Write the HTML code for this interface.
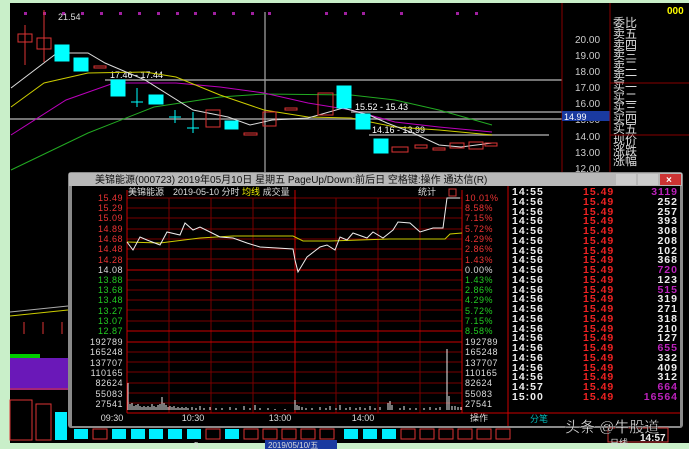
<!DOCTYPE html>
<html><head><meta charset="utf-8"><style>
html,body{margin:0;padding:0;background:#c9efc9;width:689px;height:449px;overflow:hidden}
svg{display:block}
text{font-family:"Liberation Sans","Noto Sans CJK SC",sans-serif}
.cn{font-family:"Liberation Sans","Noto Sans CJK SC",sans-serif}
</style></head><body>
<svg width="689" height="449" viewBox="0 0 689 449" xmlns="http://www.w3.org/2000/svg">
<rect x="0" y="0" width="689" height="449" fill="#c9efc9"/>
<rect x="10" y="3" width="679" height="440" fill="#000"/>
<g fill="#a020a0">
<rect x="24" y="12" width="3" height="3"/><rect x="43" y="12" width="3" height="3"/><rect x="62" y="12" width="3" height="3"/><rect x="81" y="12" width="3" height="3"/><rect x="100" y="12" width="3" height="3"/><rect x="119" y="12" width="3" height="3"/><rect x="138" y="12" width="3" height="3"/><rect x="157" y="12" width="3" height="3"/><rect x="176" y="12" width="3" height="3"/><rect x="194" y="12" width="3" height="3"/><rect x="213" y="12" width="3" height="3"/><rect x="232" y="12" width="3" height="3"/><rect x="251" y="12" width="3" height="3"/><rect x="268" y="12" width="3" height="3"/><rect x="325" y="12" width="3" height="3"/><rect x="344" y="12" width="3" height="3"/><rect x="362" y="12" width="3" height="3"/><rect x="400" y="12" width="3" height="3"/><rect x="456" y="12" width="3" height="3"/><rect x="475" y="12" width="3" height="3"/>
</g>
<text x="58" y="20" fill="#ddd" font-size="9">21.54</text>
<line x1="265" y1="12" x2="265" y2="172" stroke="#ccc"/>
<g stroke="#999" stroke-width="1.5">
<line x1="105" y1="80" x2="562" y2="80"/><line x1="351" y1="112" x2="562" y2="112"/><line x1="10" y1="119" x2="562" y2="119"/><line x1="369" y1="135" x2="549" y2="135"/>
</g>
<text x="110" y="78" fill="#fff" font-size="9">17.46 - 17.44</text>
<text x="355" y="110" fill="#fff" font-size="9">15.52 - 15.43</text>
<text x="372" y="133" fill="#fff" font-size="9">14.16 - 13.99</text>
<g fill="none" stroke-width="1">
<polyline stroke="#2a2" points="11,170 88,133 154,107 220,97 264,94 351,95 395,100 439,110 492,125"/>
<polyline stroke="#b0b" points="11,135 66,100 114,83 176,83 220,87 264,93 308,103 351,110 395,122 439,127 492,132"/>
<polyline stroke="#cc0" points="11,107 44,83 88,73 145,72 176,77 220,95 264,110 308,117 351,118 395,127 439,130 492,135"/>
<polyline stroke="#ddd" points="11,88 57,53 88,53 105,63 145,80 193,110 228,117 250,125 272,120 308,118 343,108 369,115 387,123 413,133 439,145 461,147 492,143"/>
</g>
<g stroke="#d33" fill="none">
<line x1="44" y1="10" x2="44" y2="62"/><line x1="25" y1="25" x2="25" y2="65"/>
<rect x="18" y="34" width="14" height="8"/><rect x="37" y="38" width="14" height="11"/>
<rect x="206" y="110" width="14" height="17"/><rect x="263" y="112" width="13" height="14"/>
<rect x="318" y="93" width="15" height="22"/><rect x="392" y="147" width="16" height="5"/>
<rect x="450" y="143" width="14" height="5"/><rect x="469" y="142" width="14" height="7"/>
<rect x="415" y="145" width="12" height="3"/><rect x="433" y="148" width="12" height="2"/>
<rect x="94" y="66" width="12" height="2"/><rect x="285" y="108" width="12" height="2"/>
<rect x="244" y="133" width="13" height="2"/><rect x="485" y="143" width="12" height="3"/>
</g>
<g fill="#0ff" stroke="#0ff">
<rect x="55" y="45" width="14" height="16"/><rect x="74" y="58" width="14" height="13"/>
<rect x="111" y="80" width="14" height="16"/><rect x="149" y="95" width="14" height="9"/>
<rect x="225" y="121" width="13" height="8"/><rect x="337" y="86" width="14" height="22"/>
<rect x="356" y="114" width="14" height="15"/><rect x="374" y="139" width="14" height="14"/>
<line x1="137" y1="88" x2="137" y2="107"/><line x1="131" y1="102" x2="143" y2="102"/>
<line x1="175" y1="110" x2="175" y2="123"/><line x1="169" y1="117" x2="181" y2="117"/>
<line x1="193" y1="112" x2="193" y2="133"/><line x1="187" y1="128" x2="199" y2="128"/>
</g>
<line x1="562" y1="3" x2="562" y2="172" stroke="#800"/>
<g fill="#ccc" font-size="10">
<text x="575" y="43">20.00</text><text x="575" y="59">19.00</text><text x="575" y="75">18.00</text><text x="575" y="91">17.00</text><text x="575" y="107">16.00</text><text x="575" y="123">15.00</text><text x="575" y="140">14.00</text><text x="575" y="156">13.00</text><text x="575" y="172">12.00</text>
</g>
<rect x="562" y="111" width="48" height="10" fill="#1a3aa0"/>
<text x="564" y="120" fill="#fff" font-size="9">14.99</text>
<line x1="610" y1="3" x2="610" y2="172" stroke="#800"/>
<text x="667" y="14" fill="#ff0" font-size="10" font-weight="bold">000</text>
<g fill="#ddd" font-size="12" class="cn">
<text x="613" y="27">委比</text><text x="613" y="38">卖五</text><text x="613" y="49">卖四</text><text x="613" y="59">卖三</text><text x="613" y="70">卖二</text><text x="613" y="80">卖一</text><text x="613" y="91">买一</text><text x="613" y="102">买二</text><text x="613" y="112">买三</text><text x="613" y="123">买四</text><text x="613" y="133">买五</text><text x="613" y="144">现价</text><text x="613" y="155">涨跌</text><text x="613" y="165">涨幅</text>
</g>
<line x1="610" y1="83" x2="689" y2="83" stroke="#800"/><line x1="610" y1="135" x2="689" y2="135" stroke="#800"/>
<g stroke="#d33" fill="none">
<line x1="24" y1="322" x2="24" y2="334"/><line x1="43" y1="322" x2="43" y2="334"/><line x1="62" y1="322" x2="62" y2="334"/>
<rect x="10" y="400" width="22" height="40"/><rect x="36" y="404" width="15" height="36"/>
</g>
<line x1="10" y1="312" x2="68" y2="306" stroke="#aaa"/>
<line x1="10" y1="316" x2="68" y2="310" stroke="#cc0"/>
<rect x="10" y="354" width="30" height="4" fill="#0c0"/>
<rect x="10" y="358" width="58" height="32" fill="#6a18b8"/>
<line x1="10" y1="389" x2="68" y2="389" stroke="#d33"/>
<rect x="68" y="172" width="615" height="256" fill="#8a8a8a" rx="3"/>
<rect x="69" y="173" width="613" height="13" fill="#b8b8b8"/>
<text x="95" y="183" fill="#111" font-size="10" class="cn">美锦能源(000723) 2019年05月10日 星期五 PageUp/Down:前后日 空格键:操作 通达信(R)</text>
<rect x="616" y="174" width="20" height="11" fill="#ccc"/><rect x="638" y="174" width="20" height="11" fill="#ccc"/><rect x="660" y="174" width="21" height="11" fill="#c33"/>
<text x="666" y="183" fill="#fff" font-size="10" font-weight="bold">×</text>
<rect x="72" y="186" width="608" height="240" fill="#000"/>
<text x="128" y="195" fill="#ddd" font-size="9" class="cn">美锦能源　2019-05-10 分时 <tspan fill="#ee0">均线</tspan> 成交量</text>
<text x="418" y="195" fill="#ddd" font-size="9" class="cn">统计</text>
<rect x="449" y="189" width="7" height="7" fill="none" stroke="#c33"/>
<g stroke="#700" stroke-width="1">
<line x1="127" y1="198" x2="462" y2="198"/><line x1="127" y1="208" x2="462" y2="208"/><line x1="127" y1="218" x2="462" y2="218"/><line x1="127" y1="229" x2="462" y2="229"/><line x1="127" y1="239" x2="462" y2="239"/><line x1="127" y1="249" x2="462" y2="249"/><line x1="127" y1="259" x2="462" y2="259"/><line x1="127" y1="280" x2="462" y2="280"/><line x1="127" y1="290" x2="462" y2="290"/><line x1="127" y1="300" x2="462" y2="300"/><line x1="127" y1="310" x2="462" y2="310"/><line x1="127" y1="321" x2="462" y2="321"/><line x1="127" y1="352" x2="462" y2="352"/><line x1="127" y1="362" x2="462" y2="362"/><line x1="127" y1="372" x2="462" y2="372"/><line x1="127" y1="383" x2="462" y2="383"/><line x1="127" y1="393" x2="462" y2="393"/><line x1="127" y1="403" x2="462" y2="403"/>
<line x1="169" y1="198" x2="169" y2="413"/><line x1="211" y1="198" x2="211" y2="413"/><line x1="253" y1="198" x2="253" y2="413"/><line x1="336" y1="198" x2="336" y2="413"/><line x1="378" y1="198" x2="378" y2="413"/><line x1="420" y1="198" x2="420" y2="413"/>
</g>
<g stroke="#c00" stroke-width="1">
<line x1="127" y1="270" x2="462" y2="270"/><line x1="127" y1="331" x2="462" y2="331"/><line x1="127" y1="342" x2="462" y2="342"/><line x1="127" y1="413" x2="462" y2="413"/>
<line x1="127" y1="190" x2="127" y2="413"/><line x1="295" y1="190" x2="295" y2="413"/><line x1="462" y1="190" x2="462" y2="413"/>
</g>
<g font-size="9" text-anchor="end" letter-spacing="0.5">
<g fill="#e33"><text x="123" y="201">15.49</text><text x="123" y="211">15.29</text><text x="123" y="221">15.09</text><text x="123" y="232">14.89</text><text x="123" y="242">14.68</text><text x="123" y="252">14.48</text><text x="123" y="263">14.28</text></g>
<text x="123" y="273" fill="#ddd">14.08</text>
<g fill="#2c2"><text x="123" y="283">13.88</text><text x="123" y="293">13.68</text><text x="123" y="303">13.48</text><text x="123" y="314">13.27</text><text x="123" y="324">13.07</text><text x="123" y="334">12.87</text></g>
<g fill="#ddd"><text x="123" y="345">192789</text><text x="123" y="355">165248</text><text x="123" y="366">137707</text><text x="123" y="376">110165</text><text x="123" y="386">82624</text><text x="123" y="397">55083</text><text x="123" y="407">27541</text></g>
</g>
<g font-size="9" letter-spacing="0.5">
<g fill="#e33"><text x="465" y="201">10.01%</text><text x="465" y="211">8.58%</text><text x="465" y="221">7.15%</text><text x="465" y="232">5.72%</text><text x="465" y="242">4.29%</text><text x="465" y="252">2.86%</text><text x="465" y="263">1.43%</text></g>
<text x="465" y="273" fill="#ddd">0.00%</text>
<g fill="#2c2"><text x="465" y="283">1.43%</text><text x="465" y="293">2.86%</text><text x="465" y="303">4.29%</text><text x="465" y="314">5.72%</text><text x="465" y="324">7.15%</text><text x="465" y="334">8.58%</text></g>
<g fill="#ddd"><text x="465" y="345">192789</text><text x="465" y="355">165248</text><text x="465" y="366">137707</text><text x="465" y="376">110165</text><text x="465" y="386">82624</text><text x="465" y="397">55083</text><text x="465" y="407">27541</text></g>
</g>
<polyline fill="none" stroke="#cc0" points="127,242 160,243 200,238 233,236 293,236 303,241 330,241 390,239 445,239 450,234 462,233"/>
<polyline fill="none" stroke="#eee" points="127,242 133,250 140,237 147,240 160,245 167,232 180,235 185,223 193,230 200,227 210,232 220,237 233,238 247,243 260,247 277,248 293,249 295,260 298,272 307,257 320,247 327,245 335,250 340,237 347,240 353,233 367,238 373,232 383,238 393,230 398,222 410,223 420,232 433,228 443,228 447,198 460,198"/>
<path stroke="#eee" fill="none" d="M128 410V383M130 410V404M132 410V403M134 410V406M136 410V405M138 410V404M140 410V406M142 410V407M144 410V406M146 410V407M148 410V406M150 410V407M152 410V404M154 410V406M156 410V407M158 410V405M160 410V404M162 410V397M164 410V403M166 410V405M168 410V407M170 410V406M172 410V407M174 410V406M176 410V408M178 410V407M180 410V408M182 410V407M184 410V408M186 410V407M188 410V408M192 410V407M196 410V408M200 410V406M204 410V408M210 410V407M216 410V408M222 410V408M230 410V407M236 410V408M244 410V406M250 410V408M255 410V405M260 410V408M268 410V408M275 410V409M285 410V409M295 410V400M297 410V405M299 410V406M302 410V407M306 410V408M312 410V408M320 410V407M326 410V408M330 410V406M336 410V408M340 410V405M346 410V408M350 410V407M356 410V408M360 410V407M365 410V408M370 410V406M375 410V408M380 410V407M388 410V403M390 410V401M392 410V405M400 410V408M404 410V406M410 410V408M416 410V408M424 410V408M430 410V407M436 410V408M440 410V407M447 410V349M449 410V396M452 410V406M455 410V406M458 410V407M461 410V407"/>
<g fill="#ddd" font-size="9" text-anchor="middle"><text x="112" y="421">09:30</text><text x="193" y="421">10:30</text><text x="280" y="421">13:00</text><text x="363" y="421">14:00</text></g>
<text x="470" y="421" fill="#ddd" font-size="9" class="cn">操作</text>
<line x1="508" y1="186" x2="508" y2="426" stroke="#c00"/>
<line x1="462" y1="413" x2="680" y2="413" stroke="#c00"/>
<g font-size="10.5" font-weight="bold" letter-spacing="1">
<g fill="#eee">
<text x="512" y="195">14:55</text><text x="512" y="205">14:56</text><text x="512" y="215">14:56</text><text x="512" y="224">14:56</text><text x="512" y="234">14:56</text><text x="512" y="244">14:56</text><text x="512" y="254">14:56</text><text x="512" y="263">14:56</text><text x="512" y="273">14:56</text><text x="512" y="283">14:56</text><text x="512" y="293">14:56</text><text x="512" y="302">14:56</text><text x="512" y="312">14:56</text><text x="512" y="322">14:56</text><text x="512" y="332">14:56</text><text x="512" y="341">14:56</text><text x="512" y="351">14:56</text><text x="512" y="361">14:56</text><text x="512" y="371">14:56</text><text x="512" y="380">14:56</text><text x="512" y="390">14:57</text><text x="512" y="400">15:00</text>
</g>
<g fill="#e22">
<text x="583" y="195">15.49</text><text x="583" y="205">15.49</text><text x="583" y="215">15.49</text><text x="583" y="224">15.49</text><text x="583" y="234">15.49</text><text x="583" y="244">15.49</text><text x="583" y="254">15.49</text><text x="583" y="263">15.49</text><text x="583" y="273">15.49</text><text x="583" y="283">15.49</text><text x="583" y="293">15.49</text><text x="583" y="302">15.49</text><text x="583" y="312">15.49</text><text x="583" y="322">15.49</text><text x="583" y="332">15.49</text><text x="583" y="341">15.49</text><text x="583" y="351">15.49</text><text x="583" y="361">15.49</text><text x="583" y="371">15.49</text><text x="583" y="380">15.49</text><text x="583" y="390">15.49</text><text x="583" y="400">15.49</text>
</g>
<g fill="#eee" text-anchor="end">
<text x="678" y="195" fill="#b2b">3119</text><text x="678" y="205">252</text><text x="678" y="215">257</text><text x="678" y="224">393</text><text x="678" y="234">308</text><text x="678" y="244">208</text><text x="678" y="254">102</text><text x="678" y="263">368</text><text x="678" y="273" fill="#b2b">720</text><text x="678" y="283">123</text><text x="678" y="293" fill="#b2b">515</text><text x="678" y="302">319</text><text x="678" y="312">271</text><text x="678" y="322">318</text><text x="678" y="332">210</text><text x="678" y="341">127</text><text x="678" y="351" fill="#b2b">655</text><text x="678" y="361">332</text><text x="678" y="371">409</text><text x="678" y="380">312</text><text x="678" y="390" fill="#b2b">664</text><text x="678" y="400" fill="#b2b">16564</text>
</g>
</g>
<text x="530" y="422" fill="#0bb" font-size="9" class="cn">分笔</text>
<g fill="#0ef">
<rect x="55" y="412" width="12" height="28"/><rect x="74" y="429" width="14" height="10"/><rect x="112" y="429" width="14" height="10"/><rect x="131" y="429" width="14" height="10"/><rect x="149" y="429" width="14" height="10"/><rect x="168" y="429" width="14" height="10"/><rect x="187" y="429" width="14" height="10"/><rect x="225" y="429" width="14" height="10"/><rect x="344" y="429" width="14" height="10"/><rect x="363" y="429" width="14" height="10"/><rect x="382" y="429" width="14" height="10"/>
</g>
<g fill="none" stroke="#d33">
<rect x="93" y="429" width="14" height="10"/><rect x="206" y="429" width="14" height="10"/><rect x="244" y="429" width="14" height="10"/><rect x="263" y="429" width="14" height="10"/><rect x="282" y="429" width="14" height="10"/><rect x="301" y="429" width="14" height="10"/><rect x="320" y="429" width="14" height="10"/><rect x="401" y="429" width="14" height="10"/><rect x="420" y="429" width="14" height="10"/><rect x="439" y="429" width="14" height="10"/><rect x="458" y="429" width="14" height="10"/><rect x="477" y="429" width="14" height="10"/><rect x="496" y="429" width="14" height="10"/>
</g>
<rect x="265" y="440" width="72" height="9" fill="#1a3aa0"/>
<text x="268" y="448" fill="#ddd" font-size="8" class="cn">2019/05/10/五</text>
<text x="194" y="448" fill="#ddd" font-size="8">5</text>
<rect x="608" y="428" width="60" height="14" fill="none" stroke="#c33"/>
<text x="610" y="446" fill="#ddd" font-size="9" class="cn">日线</text>
<text x="640" y="441" fill="#eee" font-size="10" font-weight="bold">14:57</text>
<text x="565" y="432" fill="#fff" font-size="15" class="cn" stroke="#000" stroke-width="0.4">头条 @牛股道</text>
</svg>
</body></html>
